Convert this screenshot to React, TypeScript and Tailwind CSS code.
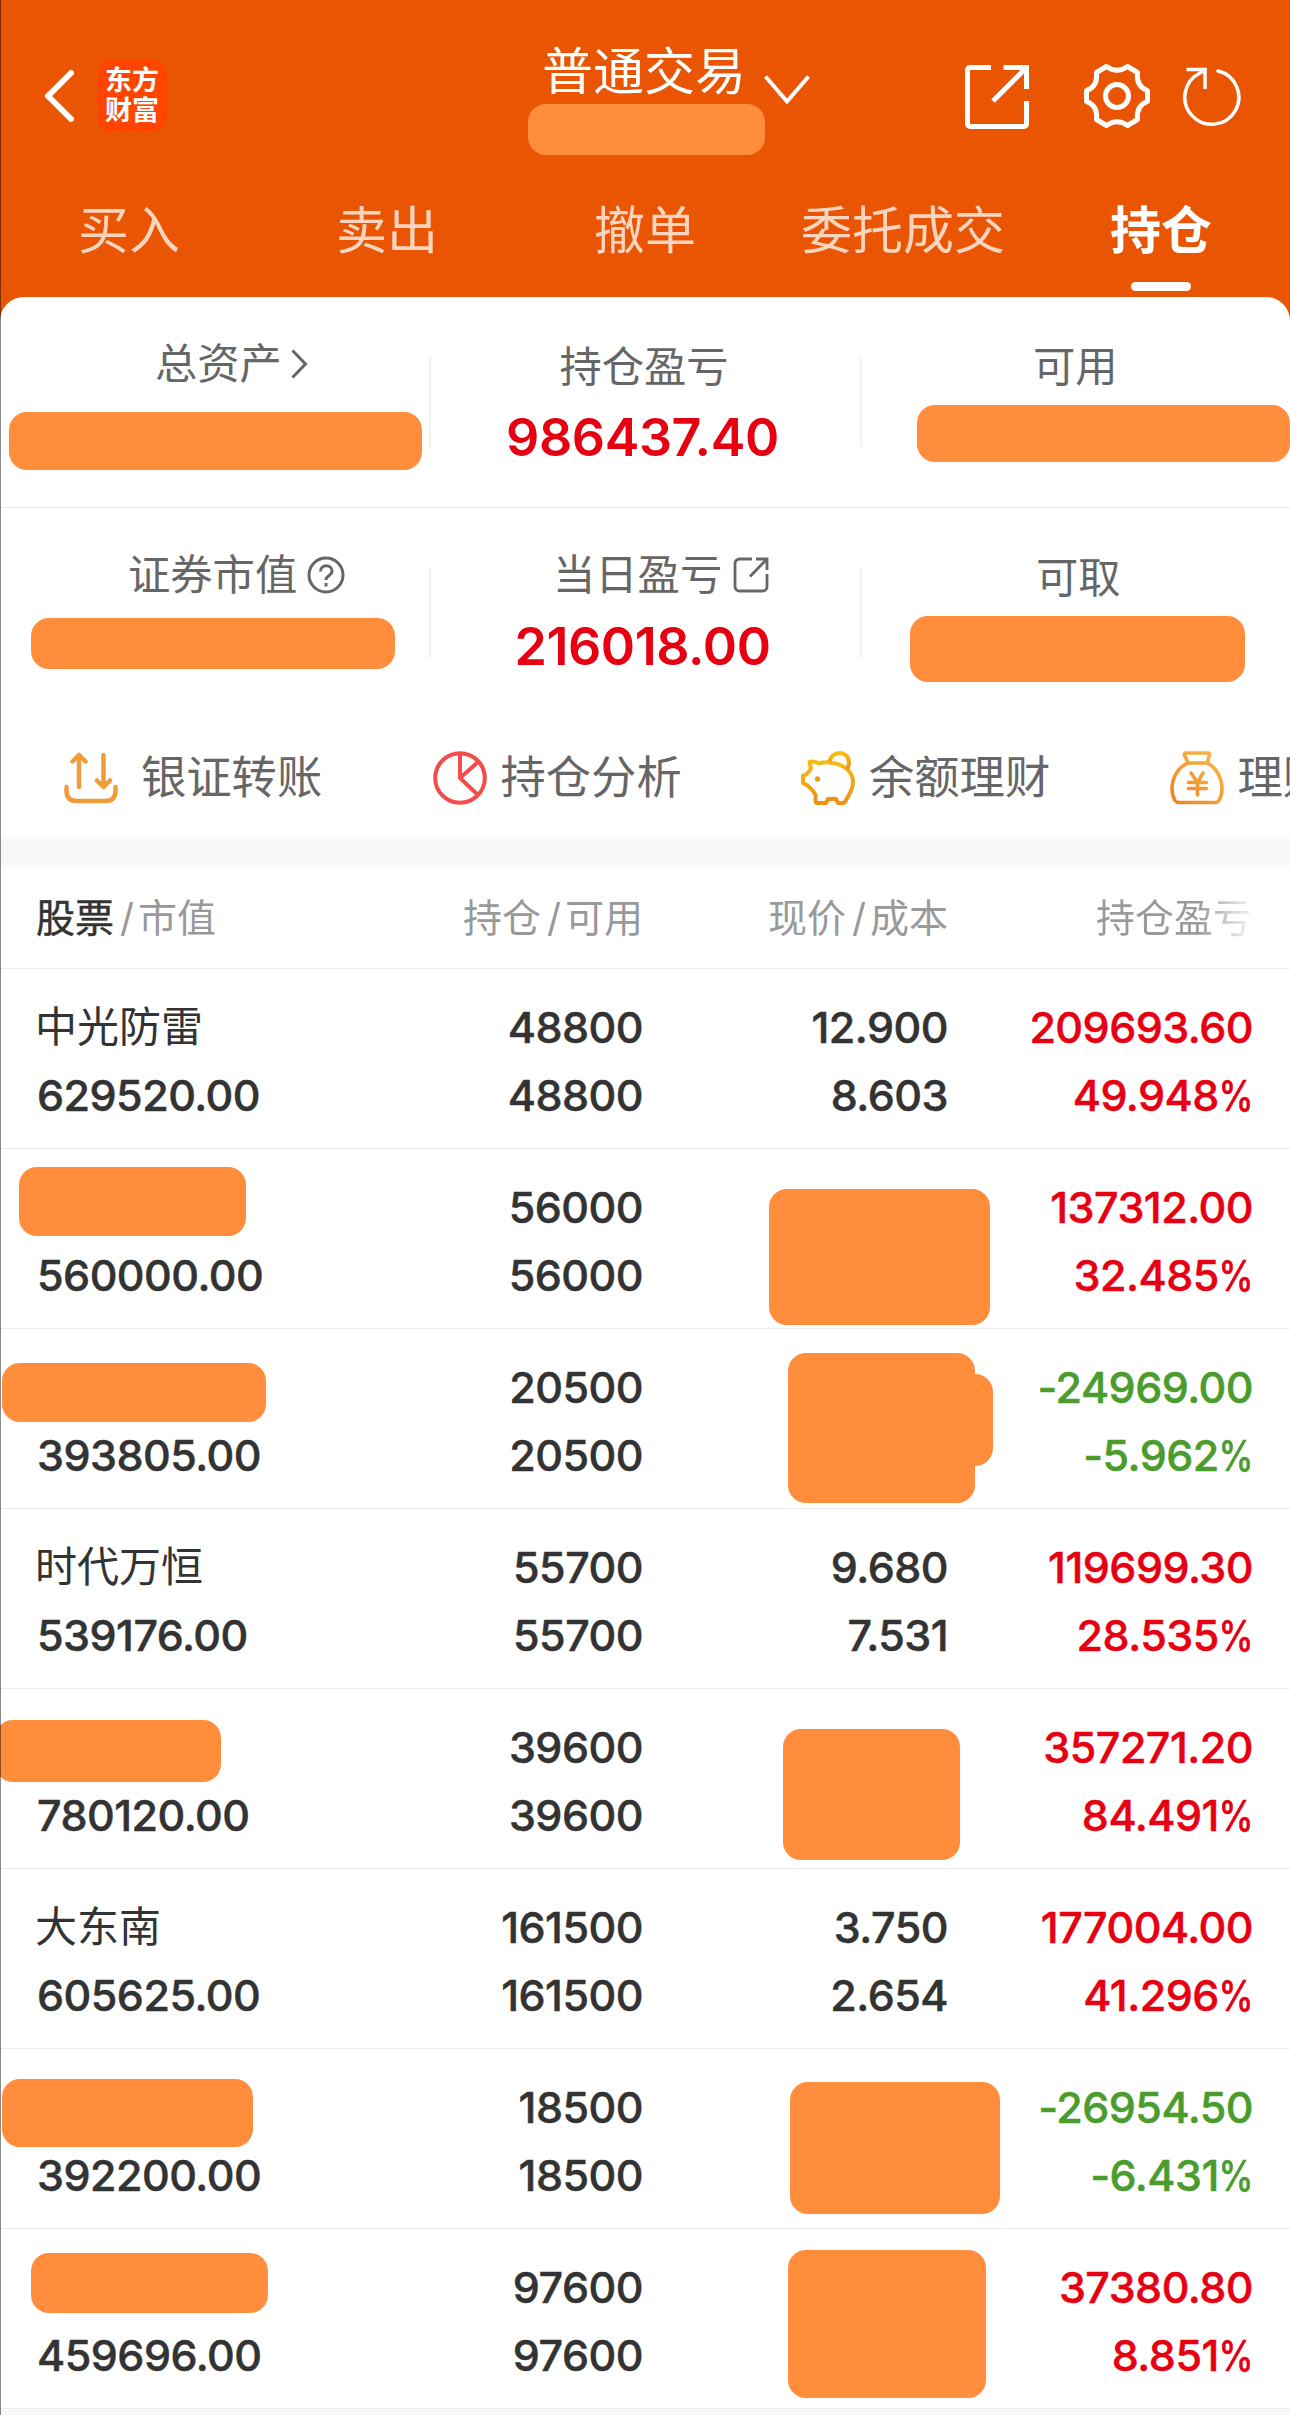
import React from "react";

interface Box {
  left: number;
  top: number;
  width: number;
  height: number;
}

interface Holding {
  name: string;
  value: string;
  amount: string;
  available: string;
  price: string;
  cost: string;
  profit: string;
  rate: string;
  masks: Box[];
}

const tabs = ["买入", "卖出", "撤单", "委托成交", "持仓"];

const holdings: Holding[] = [
  { name: "中光防雷", value: "629520.00", amount: "48800", available: "48800", price: "12.900", cost: "8.603", profit: "209693.60", rate: "49.948", masks: [] },
  {
    name: "", value: "560000.00", amount: "56000", available: "56000", price: "", cost: "", profit: "137312.00", rate: "32.485",
    masks: [
      { left: 19, top: 18, width: 227, height: 69 },
      { left: 769, top: 40, width: 221, height: 136 },
    ],
  },
  {
    name: "", value: "393805.00", amount: "20500", available: "20500", price: "", cost: "", profit: "-24969.00", rate: "-5.962",
    masks: [
      { left: 2, top: 34, width: 264, height: 59 },
      { left: 788, top: 24, width: 187, height: 150 },
      { left: 900, top: 45, width: 93, height: 92 },
    ],
  },
  { name: "时代万恒", value: "539176.00", amount: "55700", available: "55700", price: "9.680", cost: "7.531", profit: "119699.30", rate: "28.535", masks: [] },
  {
    name: "", value: "780120.00", amount: "39600", available: "39600", price: "", cost: "", profit: "357271.20", rate: "84.491",
    masks: [
      { left: -5, top: 31, width: 226, height: 62 },
      { left: 783, top: 40, width: 177, height: 131 },
    ],
  },
  { name: "大东南", value: "605625.00", amount: "161500", available: "161500", price: "3.750", cost: "2.654", profit: "177004.00", rate: "41.296", masks: [] },
  {
    name: "", value: "392200.00", amount: "18500", available: "18500", price: "", cost: "", profit: "-26954.50", rate: "-6.431",
    masks: [
      { left: 2, top: 30, width: 251, height: 68 },
      { left: 790, top: 33, width: 210, height: 132 },
    ],
  },
  {
    name: "", value: "459696.00", amount: "97600", available: "97600", price: "", cost: "", profit: "37380.80", rate: "8.851",
    masks: [
      { left: 31, top: 24, width: 237, height: 60 },
      { left: 788, top: 21, width: 198, height: 148 },
    ],
  },
];

const ShareIcon = () => (
  <svg viewBox="0 0 64 64" fill="none" stroke="white" strokeWidth="5" className="mt-[2px] mr-[55px] h-[64px] w-[64px]">
    <path d="M26 2.500H5A2.500 2.500 0 0 0 2.500 5v54A2.500 2.500 0 0 0 5 61.500h54a2.500 2.500 0 0 0 2.500-2.500V36" />
    <path d="M38.500 2.500h23V24M61 3 28 36" />
  </svg>
);

const SmallShareIcon = () => (
  <svg viewBox="0 0 36 36" fill="none" stroke="currentColor" strokeWidth="2.800" className="ml-[11px] h-[36px] w-[36px]">
    <path d="M19 2H6.500A4.500 4.500 0 0 0 2 6.500v23A4.500 4.500 0 0 0 6.500 34h23a4.500 4.500 0 0 0 4.500-4.500V17" />
    <path d="M23 2h11v11M33.500 2.500 17 19.500" />
  </svg>
);

const GearIcon = () => (
  <svg viewBox="0 0 66 66" fill="none" stroke="white" strokeWidth="5" strokeLinejoin="round" className="h-[66px] w-[66px]">
    <path d="M22.500 3.500Q33 11 43.500 3.500L53.500 9.500Q52 23.500 63.500 27.500V38.500Q52 42.500 53.500 56.500L43.500 62.500Q33 55 22.500 62.500L12.500 56.500Q14 42.500 2.500 38.500V27.500Q14 23.500 12.500 9.500Z" />
    <ellipse cx="33" cy="33" rx="11.500" ry="11.500" />
  </svg>
);

const TransferIcon = () => (
  <svg viewBox="0 0 54 54" fill="none" stroke="#ee9d38" strokeWidth="4.500" strokeLinecap="round" strokeLinejoin="round" className="h-[54px] w-[54px]">
    <path d="M15 36V4M8.500 10.500 15 4l6.500 6.500M39.500 4v32M33 29.500l6.500 6.500 6.500-6.500" />
    <path d="M2.500 36v4q0 10 10 10h29q10 0 10-10v-4" />
  </svg>
);

const PieIcon = () => (
  <svg viewBox="0 0 54 54" fill="none" stroke="#f44c4c" strokeWidth="4" className="h-[54px] w-[54px]">
    <circle cx="27" cy="27" r="24.800" />
    <path d="M27 2v25l18 17M27 27l18-16" />
  </svg>
);

const PiggyIcon = () => (
  <svg viewBox="0 0 54 54" fill="none" stroke="url(#piggy)" strokeWidth="4" strokeLinejoin="round" className="h-[54px] w-[54px]">
    <defs>
      <linearGradient id="piggy" x1="0" y1="0" x2="0" y2="1">
        <stop offset="0" stopColor="#f8bc12" />
        <stop offset="1" stopColor="#ec9213" />
      </linearGradient>
    </defs>
    <path d="M8.500 11q5-1.500 9 1.500 7-2 14-.5c12 1.500 20.500 9 20.500 19 0 8-4 12-7.500 19q-1 2-3 2H37l-2-4h-8l-2 4h-8q-2.500 0-2.500-2.500V44C13 40 9 37 6.500 34.500L2 32v-7.500c4 0 5-3 8-7Z" />
    <path d="M28.500 11c1.500-12 19.500-12 19.500.5 0 3-1 5-2.500 6.500" />
    <circle cx="16.500" cy="28" r="2.700" fill="#ec9b13" stroke="none" />
  </svg>
);

const MoneyBagIcon = () => (
  <svg viewBox="0 0 54 54" fill="none" stroke="url(#bag)" strokeWidth="3.600" strokeLinecap="round" strokeLinejoin="round" className="h-[54px] w-[54px]">
    <defs>
      <linearGradient id="bag" gradientUnits="userSpaceOnUse" x1="50" y1="0" x2="4" y2="54">
        <stop offset="0" stopColor="#f9b84b" />
        <stop offset="1" stopColor="#ec8424" />
      </linearGradient>
    </defs>
    <path d="M16 2h22q2 0 1.500 2L37 12H18L14.500 4Q14 2 16 2ZM18 12C8 16 2 27 2 38c0 5 1 8 3 11.500q1.500 2 4 2h36q2.500 0 4-2C51 46 52 43 52 38c0-11-6-22-15-26" />
    <path d="m21 22 6.500 9.500L33 22M18.500 31.500h18M18.500 37.500h18M27.500 31.500V44" />
  </svg>
);

const actions = [
  { label: "银证转账", icon: <TransferIcon />, gap: "gap-[23px]" },
  { label: "持仓分析", icon: <PieIcon />, gap: "gap-[14px]" },
  { label: "余额理财", icon: <PiggyIcon />, gap: "gap-[14px]" },
  { label: "理财", icon: <MoneyBagIcon />, gap: "gap-[14px]" },
];

const Header = () => (
  <header className="h-[325px] bg-[#ea5504] text-white">
    <div className="grid h-[193px] grid-cols-[1fr_auto_1fr] items-start">
      <div className="flex items-center pt-[60px] pl-[44px]">
        <svg viewBox="0 0 30 52" fill="none" stroke="white" strokeWidth="6" strokeLinecap="round" strokeLinejoin="round" className="h-[52px] w-[30px]">
          <path d="M27 3 4 26l23 23" />
        </svg>
        <div className="ml-[23px] flex h-[71px] w-[70px] flex-col items-center justify-center rounded-[14px] bg-[#ff4500] text-[27px] leading-[30px] font-bold">
          <span>东方</span>
          <span>财富</span>
        </div>
      </div>
      <div className="relative -ml-[2px] pt-[42px]">
        <div className="text-[51px] leading-[60px]">普通交易</div>
        <div className="mt-[2px] -mr-[19px] -ml-[14px] h-[51px] rounded-[18px] bg-[#ff8d3c]" />
        <svg viewBox="0 0 46 30" fill="none" stroke="white" strokeWidth="4" className="absolute top-[75px] left-[222px] h-[30px] w-[46px]">
          <path d="m1.500 1.500 21.500 25 21.500-25" />
        </svg>
      </div>
      <div className="flex items-center justify-end pt-[63px] pr-[49px]">
        <ShareIcon />
        <GearIcon />
        <svg viewBox="0 0 58 62" fill="none" stroke="white" strokeWidth="3.500" className="ml-[33px] h-[62px] w-[58px]">
          <path d="M35 6A27 27 0 1 1 17 8L22 4.500" strokeLinecap="round" />
          <path d="M3.500 4.500H22V24" />
        </svg>
      </div>
    </div>
    <nav className="grid grid-cols-5">
      {tabs.map((tab) => {
        const active = tab === "持仓";
        return (
          <div key={tab} className="flex flex-col items-center">
            <span className={active ? "text-[51px] leading-[76px] font-bold" : "text-[51px] leading-[76px] text-[#fbd5bf]"}>{tab}</span>
            {active && <div className="mt-[13px] h-[9px] w-[60px] rounded-full bg-white" />}
          </div>
        );
      })}
    </nav>
  </header>
);

const Divider = () => <div className="mt-[60px] h-[90px] w-[2px] bg-[#f2f2f3]" />;

const Summary = () => (
  <section className="-mt-7 rounded-t-[24px] bg-white text-[42.300px] leading-[60px] text-[#666]">
    <div className="flex h-[211px] border-b border-[#ececec]">
      <div className="w-[429px] pt-[37px] pl-[9px]">
        <div className="flex items-center pl-[146px]">
          总资产
          <svg viewBox="0 0 17 30" fill="none" stroke="currentColor" strokeWidth="3" className="ml-[9px] h-[30px] w-[17px]">
            <path d="m1.500 1.500 13 13.500-13 13.500" />
          </svg>
        </div>
        <div className="mt-[18px] h-[58px] w-[413px] rounded-[18px] bg-[#ff8d3c]" />
      </div>
      <Divider />
      <div className="w-[429px] pt-[40px] text-center">
        <div className="-ml-[3px]">持仓盈亏</div>
        <div className="mt-[11px] -ml-[6px] text-[52px] font-semibold tracking-[-0.008em] text-[#e60012]">986437.40</div>
      </div>
      <Divider />
      <div className="flex-1 pt-[40px] pl-[55px]">
        <div className="pl-[116px]">可用</div>
        <div className="mt-[8px] h-[57px] rounded-[18px] bg-[#ff8d3c]" />
      </div>
    </div>
    <div className="flex h-[211px]">
      <div className="w-[429px] pt-[37px] pl-[31px]">
        <div className="flex items-center pl-[97px]">
          证券市值
          <svg viewBox="0 0 38 38" fill="none" stroke="currentColor" strokeWidth="3" className="ml-[10px] h-[38px] w-[38px]">
            <circle cx="19" cy="19" r="17" />
            <path d="M13.500 15.500c0-8 11.500-7 11.500-.5 0 5-6 4.500-6 9M19 27v3.500" />
          </svg>
        </div>
        <div className="mt-[13px] h-[51px] w-[364px] rounded-[18px] bg-[#ff8d3c]" />
      </div>
      <Divider />
      <div className="w-[429px] pt-[37px] text-center">
        <div className="flex items-center pl-[122px]">
          当日盈亏
          <SmallShareIcon />
        </div>
        <div className="mt-[10px] -ml-[6px] text-[52px] leading-[64px] font-semibold tracking-[-0.008em] text-[#e60012]">216018.00</div>
      </div>
      <Divider />
      <div className="flex-1 pt-[40px] pl-[48px]">
        <div className="pl-[126px]">可取</div>
        <div className="mt-[8px] h-[66px] w-[335px] rounded-[18px] bg-[#ff8d3c]" />
      </div>
    </div>
    <div className="flex h-[118px] overflow-hidden pl-[64px] text-[45.300px]">
      {actions.map((action) => (
        <div key={action.label} className={`flex h-[118px] w-[368.500px] flex-none items-center ${action.gap}`}>
          {action.icon}
          <span className="whitespace-nowrap">{action.label}</span>
        </div>
      ))}
    </div>
  </section>
);

const HoldingRow = ({ item }: { item: Holding }) => {
  const tone = item.profit.startsWith("-") ? "text-[#4a9c2d]" : "text-[#e60012]";
  return (
    <div className="relative grid h-[180px] grid-cols-[360px_283px_305px_305px] border-b border-[#ececec] pt-[24px] text-right text-[43px] leading-[68px] font-medium tracking-[-0.012em] text-[#333]">
      <div className="pl-[37px] text-left">
        <div className="-ml-[2px] h-[68px] text-[42px] font-normal tracking-normal">{item.name}</div>
        <div className="[-webkit-text-stroke:0.5px]">{item.value}</div>
      </div>
      <div className="[-webkit-text-stroke:0.5px]">
        <div>{item.amount}</div>
        <div>{item.available}</div>
      </div>
      <div className="[-webkit-text-stroke:0.5px]">
        <div className="h-[68px]">{item.price}</div>
        <div>{item.cost}</div>
      </div>
      <div className={`[-webkit-text-stroke:0.5px] ${tone}`}>
        <div>{item.profit}</div>
        <div>
          {item.rate}
          <span className="-ml-[8px] inline-block origin-right scale-x-[0.82]">%</span>
        </div>
      </div>
      {item.masks.map((mask) => (
        <div key={`${mask.left}-${mask.top}`} className="absolute rounded-[18px] bg-[#ff8d3c]" style={mask} />
      ))}
    </div>
  );
};

const Slash = () => <span className="pr-[4px] pl-[6px]">/</span>;

export default function App() {
  return (
    <div className="relative h-[2415px] w-[1290px] overflow-hidden bg-[#f6f8fa] font-[Inter,'Noto_Sans_CJK_SC',sans-serif]">
      <Header />
      <Summary />
      <main className="mt-[30px] bg-white">
        <div className="grid h-[102px] grid-cols-[360px_283px_305px_304px] items-center border-b border-[#ececec] pt-[2px] text-right text-[39px] text-[#999]">
          <div className="pl-[36px] text-left">
            <span className="text-[#333] [-webkit-text-stroke:0.5px_#333]">股票</span>
            <Slash />
            市值
          </div>
          <div>
            持仓
            <Slash />
            可用
          </div>
          <div>
            现价
            <Slash />
            成本
          </div>
          <div>
            <span className="bg-linear-to-r from-[#999] from-65% to-[#999]/10 bg-clip-text text-transparent">持仓盈亏</span>
          </div>
        </div>
        {holdings.map((item) => (
          <HoldingRow key={item.value} item={item} />
        ))}
      </main>
      <div className="absolute inset-y-0 left-0 w-px bg-black/45" />
    </div>
  );
}
